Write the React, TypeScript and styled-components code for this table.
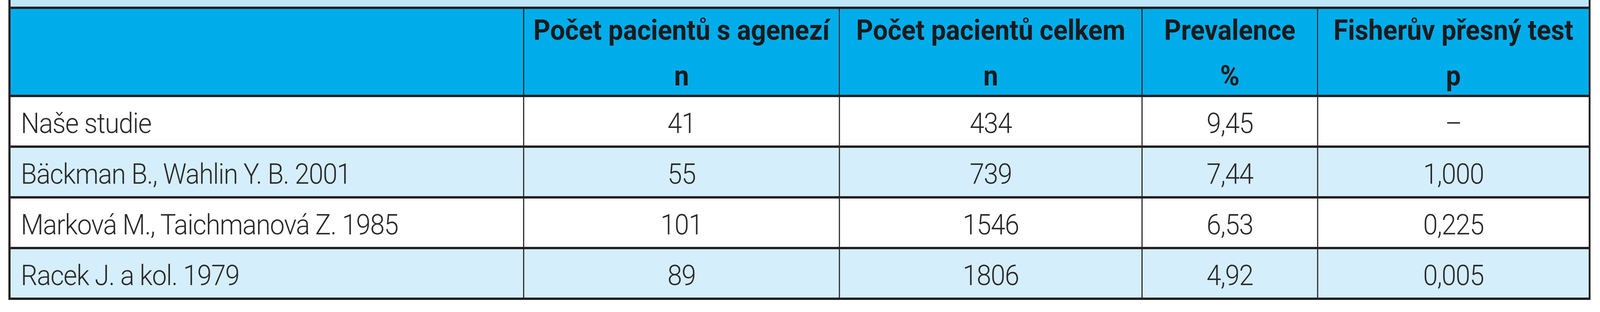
import React, { useLayoutEffect, useState } from "react";
import styled, { createGlobalStyle } from "styled-components";

const GlobalStyle = createGlobalStyle`
  html, body {
    margin: 0;
    padding: 0;
    background: #ffffff;
    overflow: hidden;
  }
  body {
    font-family: Roboto, "Open Sans", "Liberation Sans", sans-serif;
    color: #231f20;
  }
`;

const LINE = "#231f20";
// the table is drawn for a 4383px wide frame and squeezed to the real viewport
const DESIGN_WIDTH = 4383;

const Viewport = styled.div`
  width: 100%;
  height: 800px;
  overflow: hidden;
`;

const Page = styled.div`
  width: ${DESIGN_WIDTH}px;
  height: 800px;
  padding-left: 23px;
  box-sizing: border-box;
  transform-origin: 0 0;
`;

const Table = styled.table`
  width: 4334px;
  table-layout: fixed;
  border-collapse: separate;
  border-spacing: 0;
  border-left: 6px solid ${LINE};
  border-right: 5px solid ${LINE};
`;

const BandCell = styled.td`
  box-sizing: border-box;
  height: 23px;
  padding: 0;
  background: #bee6f8;
  border-bottom: 6px solid ${LINE};
`;

const HeadCell = styled.th<{ $last?: boolean }>`
  box-sizing: border-box;
  height: 226px;
  padding: 13px 4px 0;
  vertical-align: top;
  background: #00adeb;
  border-bottom: 6px solid ${LINE};
  border-right: ${(p) => (p.$last ? "none" : `3px solid ${LINE}`)};
  font-size: 72px;
  font-weight: 700;
  color: #1b1a1c;
  text-align: center;
  white-space: nowrap;
`;

const HeadLabel = styled.div`
  line-height: 84px;
`;

const HeadUnit = styled.div`
  margin-top: 33px;
  line-height: 84px;
`;

const Row = styled.tr<{ $shaded?: boolean }>`
  background: ${(p) => (p.$shaded ? "#d4eefb" : "#ffffff")};
`;

const Cell = styled.td<{ $first?: boolean; $last?: boolean }>`
  box-sizing: border-box;
  height: 130px;
  padding: 26px 8px 0 ${(p) => (p.$first ? "28px" : "8px")};
  vertical-align: top;
  border-bottom: 6px solid ${LINE};
  border-right: ${(p) => (p.$last ? "none" : `3px solid ${LINE}`)};
  font-size: 72px;
  font-weight: 300;
  line-height: 84px;
  letter-spacing: -1.5px;
  color: #2b2829;
  text-align: ${(p) => (p.$first ? "left" : "center")};
  white-space: nowrap;
`;

const columns = [
  { width: 1407 },
  { width: 865, label: "Počet pacientů s agenezí", unit: "n" },
  { width: 829, label: "Počet pacientů celkem", unit: "n" },
  { width: 481, label: "Prevalence", unit: "%" },
  { width: 741, label: "Fisherův přesný test", unit: "p" },
];

const rows = [
  ["Naše studie", "41", "434", "9,45", "–"],
  ["Bäckman B., Wahlin Y. B. 2001", "55", "739", "7,44", "1,000"],
  ["Marková M., Taichmanová Z. 1985", "101", "1546", "6,53", "0,225"],
  ["Racek J. a kol. 1979", "89", "1806", "4,92", "0,005"],
];

function useStageScale() {
  const [scale, setScale] = useState(1);
  useLayoutEffect(() => {
    const update = () =>
      setScale(Math.min(1, document.documentElement.clientWidth / DESIGN_WIDTH));
    update();
    window.addEventListener("resize", update);
    return () => window.removeEventListener("resize", update);
  }, []);
  return scale;
}

export default function App() {
  const scale = useStageScale();
  return (
    <Viewport>
      <GlobalStyle />
      <Page style={{ transform: `scaleX(${scale})` }}>
        <Table>
          <colgroup>
            {columns.map((c, i) => (
              <col key={i} style={{ width: c.width }} />
            ))}
          </colgroup>
          <thead>
            <tr>
              <BandCell colSpan={5} />
            </tr>
            <tr>
              {columns.map((c, i) => (
                <HeadCell key={i} $last={i === columns.length - 1}>
                  {c.label && <HeadLabel>{c.label}</HeadLabel>}
                  {c.unit && <HeadUnit>{c.unit}</HeadUnit>}
                </HeadCell>
              ))}
            </tr>
          </thead>
          <tbody>
            {rows.map((r, ri) => (
              <Row key={ri} $shaded={ri % 2 === 1}>
                {r.map((v, ci) => (
                  <Cell key={ci} $first={ci === 0} $last={ci === r.length - 1}>
                    {v}
                  </Cell>
                ))}
              </Row>
            ))}
          </tbody>
        </Table>
      </Page>
    </Viewport>
  );
}
